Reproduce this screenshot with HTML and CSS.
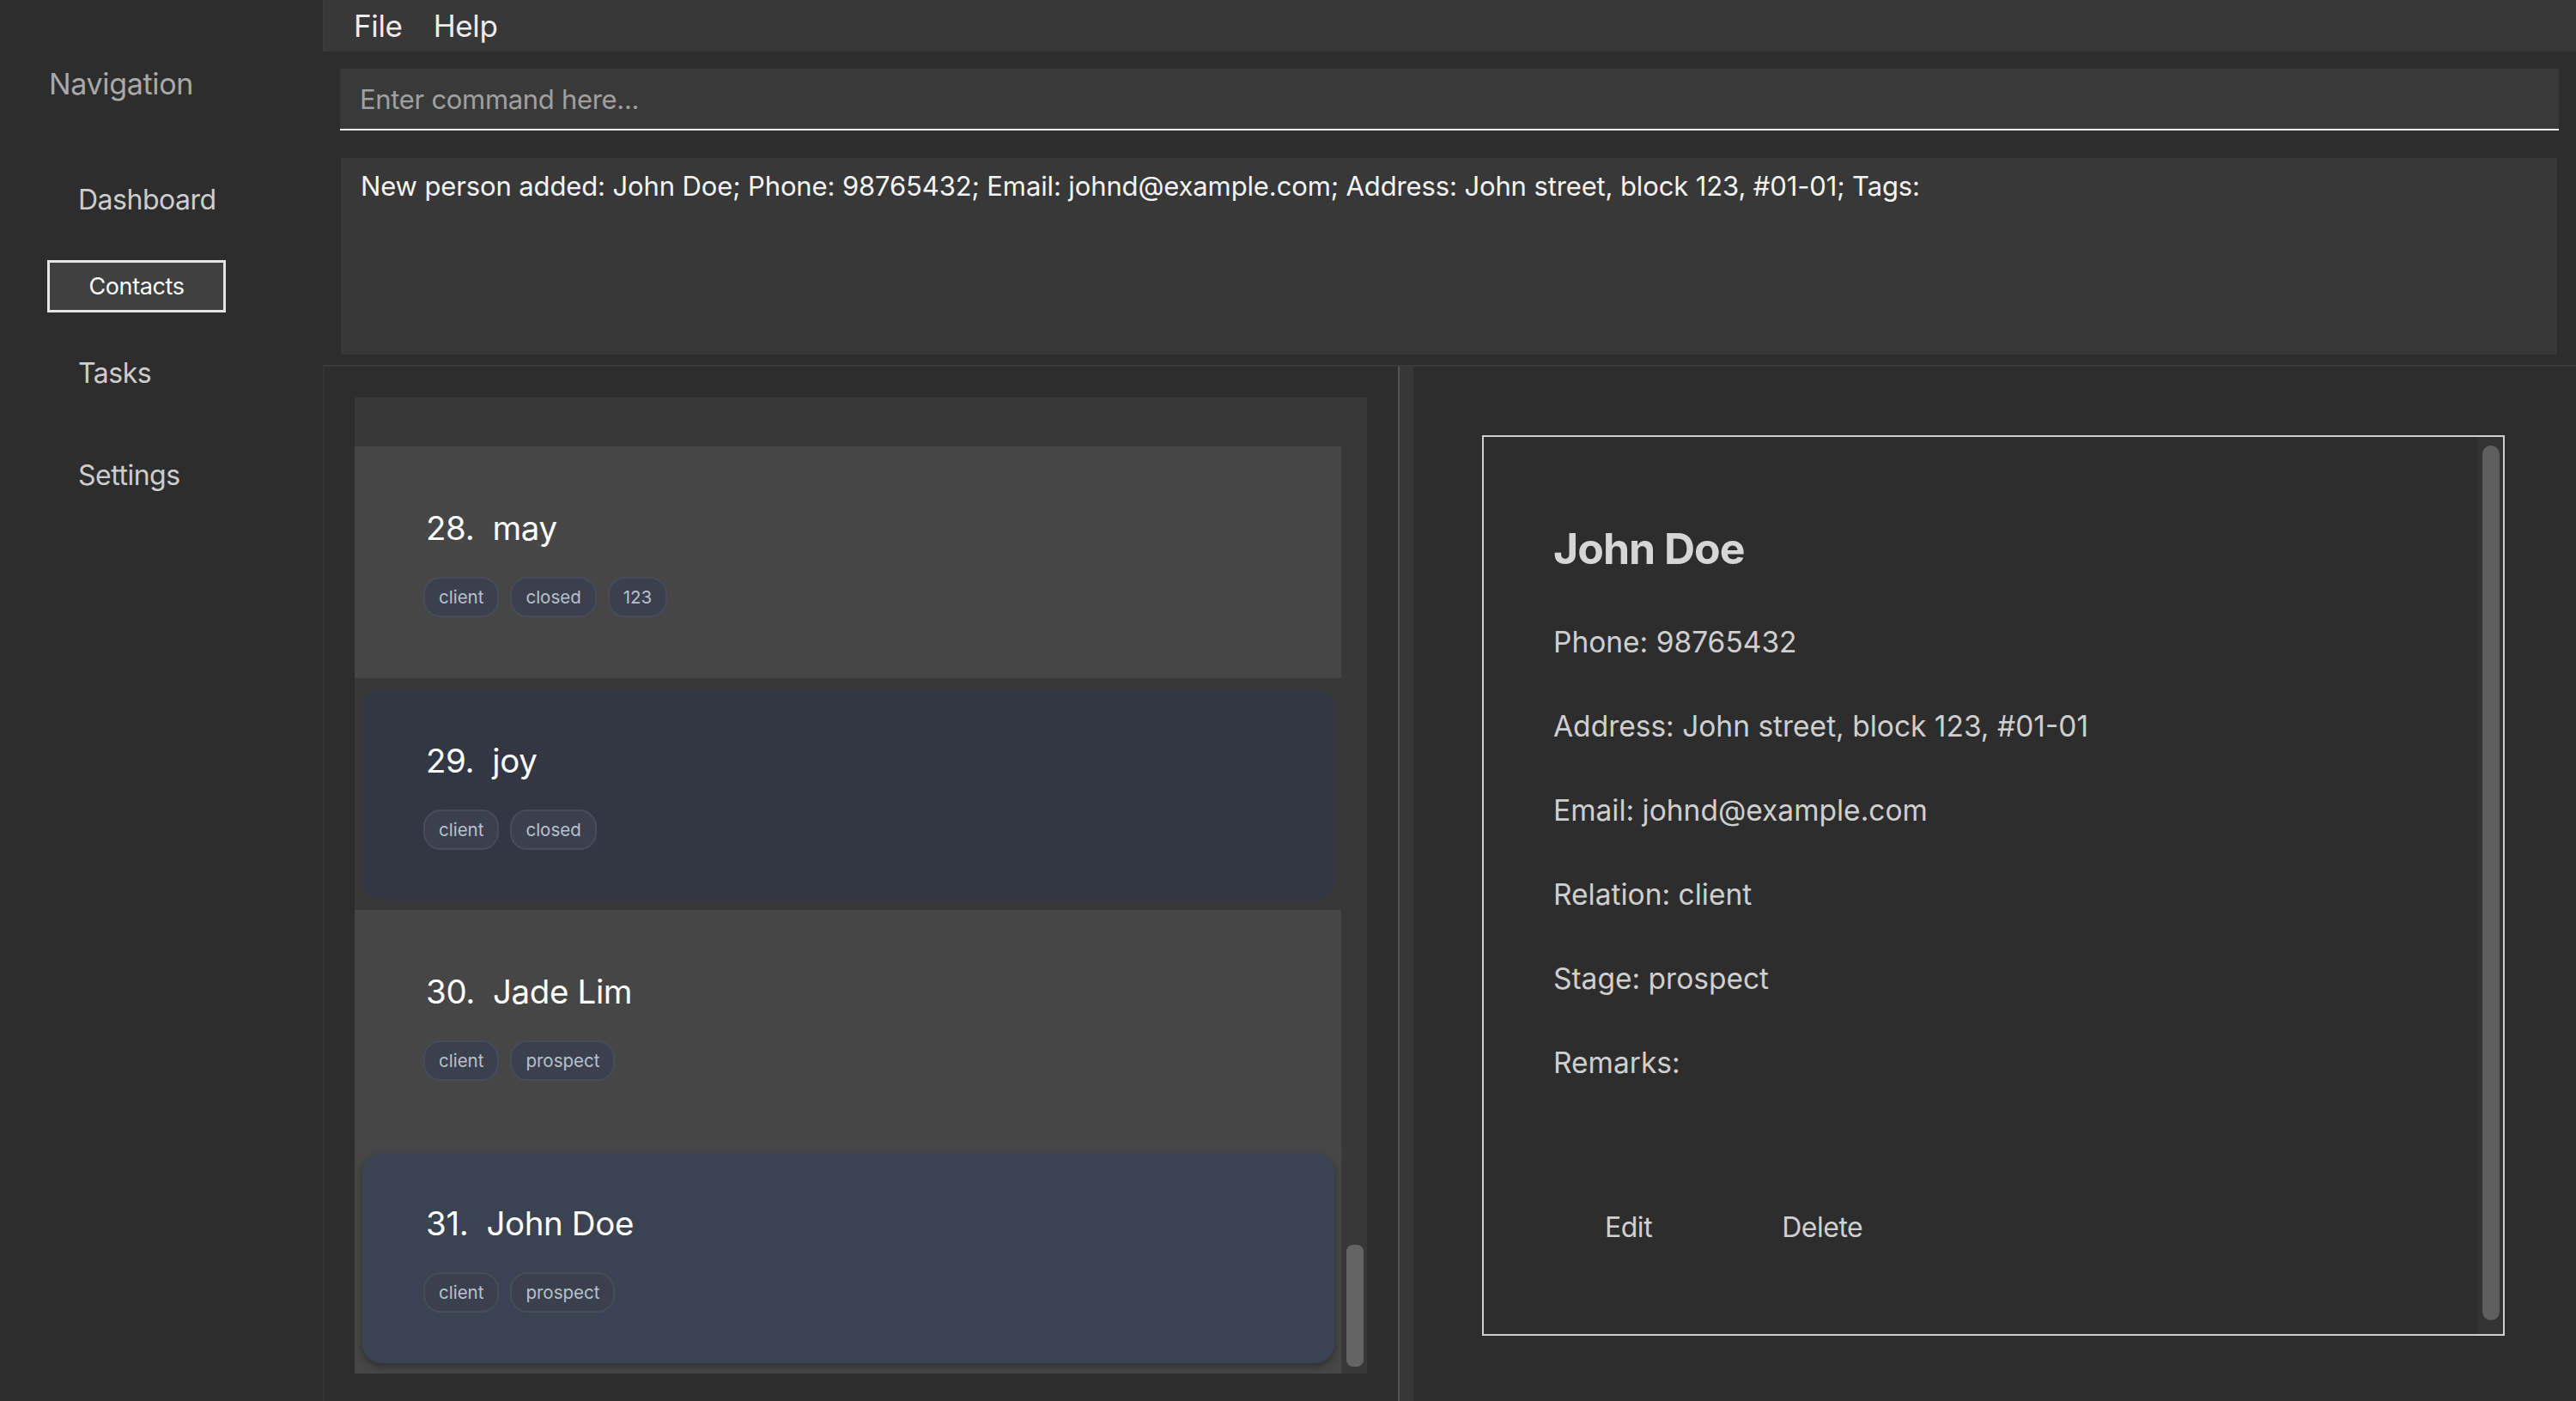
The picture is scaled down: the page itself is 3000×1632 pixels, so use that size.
FILE: index.html
```html
<!DOCTYPE html>
<html lang="en">
<head>
<meta charset="utf-8">
<title>Contacts</title>
<link rel="stylesheet" href="styles.css">
</head>
<body>
<div class="app">
  <aside class="sidebar">
    <div class="nav-title">Navigation</div>
    <nav class="nav">
      <div class="nav-item nav-first">Dashboard</div>
      <div class="nav-item nav-active">Contacts</div>
      <div class="nav-item">Tasks</div>
      <div class="nav-item nav-last">Settings</div>
    </nav>
  </aside>
  <main class="main">
    <div class="menubar">
      <span class="menu-item">File</span>
      <span class="menu-item">Help</span>
    </div>
    <div class="command-wrap">
      <div class="command">Enter command here...</div>
    </div>
    <div class="result-wrap">
      <div class="result">New person added: John Doe; Phone: 98765432; Email: johnd@example.com; Address: John street, block 123, #01-01; Tags:</div>
    </div>
    <div class="lower">
      <section class="left-panel">
        <div class="list">
          <div class="cells">
            <div class="cell-partial"></div>
            <div class="cell cell-plain">
              <div class="card-content">
                <div class="card-name"><span class="idx">28.</span><span>may</span></div>
                <div class="tags"><span class="tag">client</span><span class="tag">closed</span><span class="tag">123</span></div>
              </div>
            </div>
            <div class="cell cell-round">
              <div class="card-content round round-dark">
                <div class="card-name"><span class="idx">29.</span><span>joy</span></div>
                <div class="tags"><span class="tag">client</span><span class="tag">closed</span></div>
              </div>
            </div>
            <div class="cell cell-plain">
              <div class="card-content">
                <div class="card-name"><span class="idx">30.</span><span>Jade Lim</span></div>
                <div class="tags"><span class="tag">client</span><span class="tag">prospect</span></div>
              </div>
            </div>
            <div class="cell cell-round cell-selected">
              <div class="card-content round round-sel">
                <div class="card-name"><span class="idx">31.</span><span>John Doe</span></div>
                <div class="tags"><span class="tag">client</span><span class="tag">prospect</span></div>
              </div>
            </div>
          </div>
          <div class="vscroll"><div class="thumb"></div></div>
        </div>
      </section>
      <div class="divider"></div>
      <section class="right-panel">
        <div class="detail">
          <div class="detail-body">
            <div class="detail-name">John Doe</div>
            <div class="detail-row">Phone: 98765432</div>
            <div class="detail-row">Address: John street, block 123, #01-01</div>
            <div class="detail-row">Email: johnd@example.com</div>
            <div class="detail-row">Relation: client</div>
            <div class="detail-row">Stage: prospect</div>
            <div class="detail-row">Remarks:</div>
            <div class="detail-actions">
              <button class="btn btn-edit">Edit</button>
              <button class="btn btn-delete">Delete</button>
            </div>
          </div>
          <div class="detail-scroll"><div class="detail-thumb"></div></div>
        </div>
      </section>
    </div>
  </main>
</div>
</body>
</html>
```

FILE: styles.css
```css
* { box-sizing: border-box; }
html, body {
  margin: 0;
  padding: 0;
  background: #2d2d2d;
}
body {
  font-family: Inter, "Noto Sans", sans-serif;
  color: #e6e6e6;
  width: 3000px;
  height: 1632px;
  overflow: hidden;
}
.app {
  display: flex;
  width: 3000px;
  height: 1632px;
}

/* Sidebar */
.sidebar {
  width: 376px;
  flex: none;
  background: #2d2d2d;
  padding-top: 78px;
}
.nav-title {
  margin-left: 57px;
  font-size: 34px;
  line-height: 40px;
  color: #a9a9a9;
  letter-spacing: -0.01em;
}
.nav {
  display: flex;
  flex-direction: column;
  margin-top: 83px;
  gap: 40px;
}
.nav-item {
  margin-left: 55px;
  width: 208px;
  height: 61px;
  display: flex;
  align-items: center;
  padding-left: 36px;
  font-size: 32px;
  color: #cdcdcd;
  letter-spacing: -0.015em;
}
.nav-active {
  justify-content: center;
  padding-left: 0;
  border: 3px solid #e4e4e4;
  background: #404040;
  color: #ffffff;
  font-size: 27px;
}
.nav-first { margin-top: 1px; }
.nav-last { margin-top: 18px; }

/* Main */
.main {
  flex: 1;
  display: flex;
  flex-direction: column;
  min-width: 0;
}
.menubar {
  height: 60px;
  flex: none;
  background: #383838;
  display: flex;
  align-items: center;
  padding-left: 34px;
  gap: 36px;
  border-left: 2px solid #3c3c3c;
}
.menu-item {
  font-size: 35px;
  color: #ececec;
  letter-spacing: -0.01em;
}
.command-wrap {
  padding: 20px 20px 0 20px;
}
.command {
  height: 72px;
  background: #393939;
  border-bottom: 2px solid #f4f4f4;
  display: flex;
  align-items: center;
  padding-left: 23px;
  font-size: 31px;
  color: #a0a0a0;
  letter-spacing: -0.01em;
}
.result-wrap {
  padding: 32px 22px 0 21px;
}
.result {
  height: 229px;
  background: #383838;
  padding: 14px 23px;
  font-size: 31px;
  line-height: 38px;
  color: #f4f4f4;
  letter-spacing: -0.004em;
}
.lower {
  margin-top: 12px;
  flex: 1;
  display: flex;
  border-top: 2px solid #3a3a3a;
  min-height: 0;
}

/* Left panel */
.left-panel {
  width: 1252px;
  flex: none;
  border-left: 2px solid #343434;
  padding: 36px 36px 32px 35px;
}
.list {
  height: 1137px;
  background: #383838;
  display: flex;
}
.cells {
  flex: 1;
  display: flex;
  flex-direction: column;
  overflow: hidden;
}
.cell-partial {
  height: 57px;
  flex: none;
  background: #383838;
}
.cell {
  height: 270px;
  flex: none;
  display: flex;
}
.cell-plain { background: #464646; }
.cell-round {
  background: #383838;
  padding: 13px 8px 11px 9px;
}
.cell-selected {
  background: #474747;
  padding: 13px 8px 12px 9px;
}
.card-content {
  flex: 1;
  display: flex;
  flex-direction: column;
  justify-content: center;
  padding-left: 83px;
  gap: 34px;
}
.round {
  border-radius: 22px;
  padding-left: 74px;
}
.round-dark { background: #333744; }
.round-sel {
  background: #3b4252;
  box-shadow: 0 4px 10px rgba(0, 0, 0, 0.35);
}
.card-name {
  font-size: 38.5px;
  line-height: 46px;
  color: #ffffff;
  display: flex;
  letter-spacing: -0.01em;
}
.idx { margin-right: 21px; }
.tags {
  display: flex;
  gap: 13px;
  margin-left: -3px;
}
.tag {
  height: 47px;
  display: flex;
  align-items: center;
  padding: 0 16px;
  border: 2px solid #464c5a;
  background: #3a404e;
  border-radius: 20px;
  font-size: 20.5px;
  color: #bac0cb;
}
.vscroll {
  width: 30px;
  flex: none;
  display: flex;
  flex-direction: column;
  justify-content: flex-end;
  padding: 0 4px 8px 6px;
}
.thumb {
  height: 142px;
  background: #646464;
  border-radius: 8px;
}

.divider {
  width: 18px;
  flex: none;
  border-left: 2px solid #525252;
  background: #373737;
}

/* Right panel */
.right-panel {
  flex: 1;
  padding: 80px 83px 0 80px;
}
.detail {
  height: 1049px;
  border: 2px solid #cfcfcf;
  display: flex;
}
.detail-body {
  flex: 1;
  padding: 100px 0 0 81px;
  color: #cfcfcf;
}
.detail-name {
  font-size: 50px;
  font-weight: 700;
  line-height: 60px;
  color: #d6d6d6;
  letter-spacing: -0.02em;
  margin-bottom: 30px;
}
.detail-row {
  font-size: 33.5px;
  line-height: 98px;
  height: 98px;
  letter-spacing: 0;
}
.detail-actions {
  display: flex;
  gap: 31px;
  margin-top: 107px;
}
.btn {
  font-family: inherit;
  background: transparent;
  border: none;
  height: 70px;
  padding: 0 60px;
  font-size: 32px;
  color: #d0d0d0;
  letter-spacing: -0.015em;
  cursor: pointer;
}
.detail-scroll {
  width: 30px;
  flex: none;
  background: #333333;
  padding: 10px 4px 16px 6px;
  display: flex;
}
.detail-thumb {
  flex: 1;
  background: #5f5f5f;
  border-radius: 10px;
}
```
